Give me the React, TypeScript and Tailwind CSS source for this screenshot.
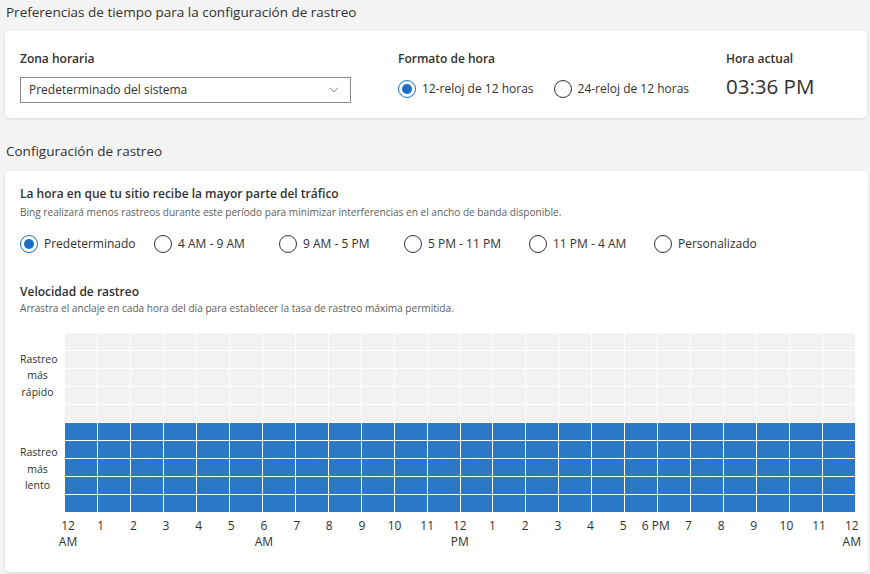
import React from "react";
import { ChevronDown } from "lucide-react";

const Radio = ({ checked, label }: { checked?: boolean; label: string }) => (
  <div className="flex items-center">
    <span
      className={
        "flex h-[18px] w-[18px] items-center justify-center rounded-full border " +
        (checked ? "border-[#1a6fc4]" : "border-[#323130]")
      }
    >
      {checked && <span className="h-[10px] w-[10px] rounded-full bg-[#1a6fc4]" />}
    </span>
    <span className="ml-[6px] text-[12px] leading-[18px] text-[#323130]">{label}</span>
  </div>
);

const hours: [string, string][] = [
  ["12", "AM"], ["1", ""], ["2", ""], ["3", ""], ["4", ""], ["5", ""], ["6", "AM"], ["7", ""],
  ["8", ""], ["9", ""], ["10", ""], ["11", ""], ["12", "PM"], ["1", ""], ["2", ""], ["3", ""],
  ["4", ""], ["5", ""], ["6 PM", ""], ["7", ""], ["8", ""], ["9", ""], ["10", ""], ["11", ""], ["12", "AM"],
];

const options: { label: string; checked: boolean; w: string }[] = [
  { label: "Predeterminado", checked: true, w: "w-[134px]" },
  { label: "4 AM - 9 AM", checked: false, w: "w-[125px]" },
  { label: "9 AM - 5 PM", checked: false, w: "w-[125px]" },
  { label: "5 PM - 11 PM", checked: false, w: "w-[125px]" },
  { label: "11 PM - 4 AM", checked: false, w: "w-[125px]" },
  { label: "Personalizado", checked: false, w: "w-[125px]" },
];

export default function App() {
  const rows = Array.from({ length: 10 });
  const cols = Array.from({ length: 24 });
  return (
    <div
      className="h-[574px] w-[870px] overflow-hidden bg-[#f4f4f4] text-[#323130]"
      style={{ fontFamily: '"Open Sans", "Noto Sans", sans-serif' }}
    >
      <div className="pl-[6px] pt-[2px] text-[13.5px] leading-[20px] text-[#323130]">
        Preferencias de tiempo para la configuración de rastreo
      </div>
      <div className="ml-[5px] mt-[9px] h-[87px] w-[862px] rounded-[4px] bg-white pl-[15px] pt-[19px] shadow-[0_1px_3px_rgba(0,0,0,0.12)]">
        <div className="flex">
          <div className="w-[331px]">
            <div className="text-[12px] font-semibold leading-[18px]">Zona horaria</div>
            <div className="mt-[9px] flex h-[26px] items-center justify-between border border-[#8a8886] pl-[8px] pr-[8px]">
              <span className="text-[12px]">Predeterminado del sistema</span>
              <ChevronDown size={16} strokeWidth={1} className="text-[#605e5c]" />
            </div>
          </div>
          <div className="ml-[47px] w-[328px]">
            <div className="text-[12px] font-semibold leading-[18px]">Formato de hora</div>
            <div className="mt-[12px] flex gap-[20px]">
              <Radio checked label="12-reloj de 12 horas" />
              <Radio label="24-reloj de 12 horas" />
            </div>
          </div>
          <div>
            <div className="text-[12px] font-semibold leading-[18px]">Hora actual</div>
            <div className="mt-[5px] text-[20.5px] leading-[26px]">03:36 PM</div>
          </div>
        </div>
      </div>

      <div className="mt-[23px] pl-[6px] text-[13.5px] leading-[20px]">Configuración de rastreo</div>

      <div className="ml-[5px] mt-[10px] h-[401px] w-[863px] rounded-[4px] bg-white pl-[15px] pt-[14px] shadow-[0_1px_3px_rgba(0,0,0,0.12)]">
        <div className="text-[12px] font-semibold leading-[18px]">
          La hora en que tu sitio recibe la mayor parte del tráfico
        </div>
        <div className="mt-[2px] text-[10.1px] leading-[14px] text-[#605e5c]">
          Bing realizará menos rastreos durante este período para minimizar interferencias en el ancho de banda disponible.
        </div>
        <div className="mt-[16px] flex">
          {options.map((o) => (
            <div key={o.label} className={o.w}>
              <Radio label={o.label} checked={o.checked} />
            </div>
          ))}
        </div>

        <div className="mt-[30px] text-[12px] font-semibold leading-[18px]">Velocidad de rastreo</div>
        <div className="text-[10.1px] leading-[14px] text-[#605e5c]">
          Arrastra el anclaje en cada hora del día para establecer la tasa de rastreo máxima permitida.
        </div>

        <div className="mt-[18px] flex">
          <div className="mr-[10px] flex w-[35px] flex-col text-center text-[10.5px] leading-[16.5px] text-[#323130]">
            <div className="flex h-[89px] flex-col justify-center pb-[4px]">
              <span>Rastreo</span>
              <span>más</span>
              <span>rápido</span>
            </div>
            <div className="flex h-[90px] flex-col justify-center pt-[4px]">
              <span>Rastreo</span>
              <span>más</span>
              <span>lento</span>
            </div>
          </div>
          <div className="grid w-[790px] grid-cols-[repeat(24,minmax(0,1fr))] gap-px bg-white">
            {rows.map((_, r) =>
              cols.map((_, c) => (
                <div
                  key={r + "-" + c}
                  className={"h-[17px] " + (r < 5 ? "bg-[#f3f2f1]" : "bg-[#2a78c6]")}
                />
              ))
            )}
          </div>
        </div>

        <div className="ml-[35px] mt-[6px] flex w-[810px] justify-between text-[12px] leading-[16px] text-[#323130]">
          {hours.map(([a, b], i) => (
            <div key={i} className="flex w-[26px] flex-col items-center whitespace-nowrap">
              <span>{a}</span>
              {b && <span>{b}</span>}
            </div>
          ))}
        </div>
      </div>
    </div>
  );
}
